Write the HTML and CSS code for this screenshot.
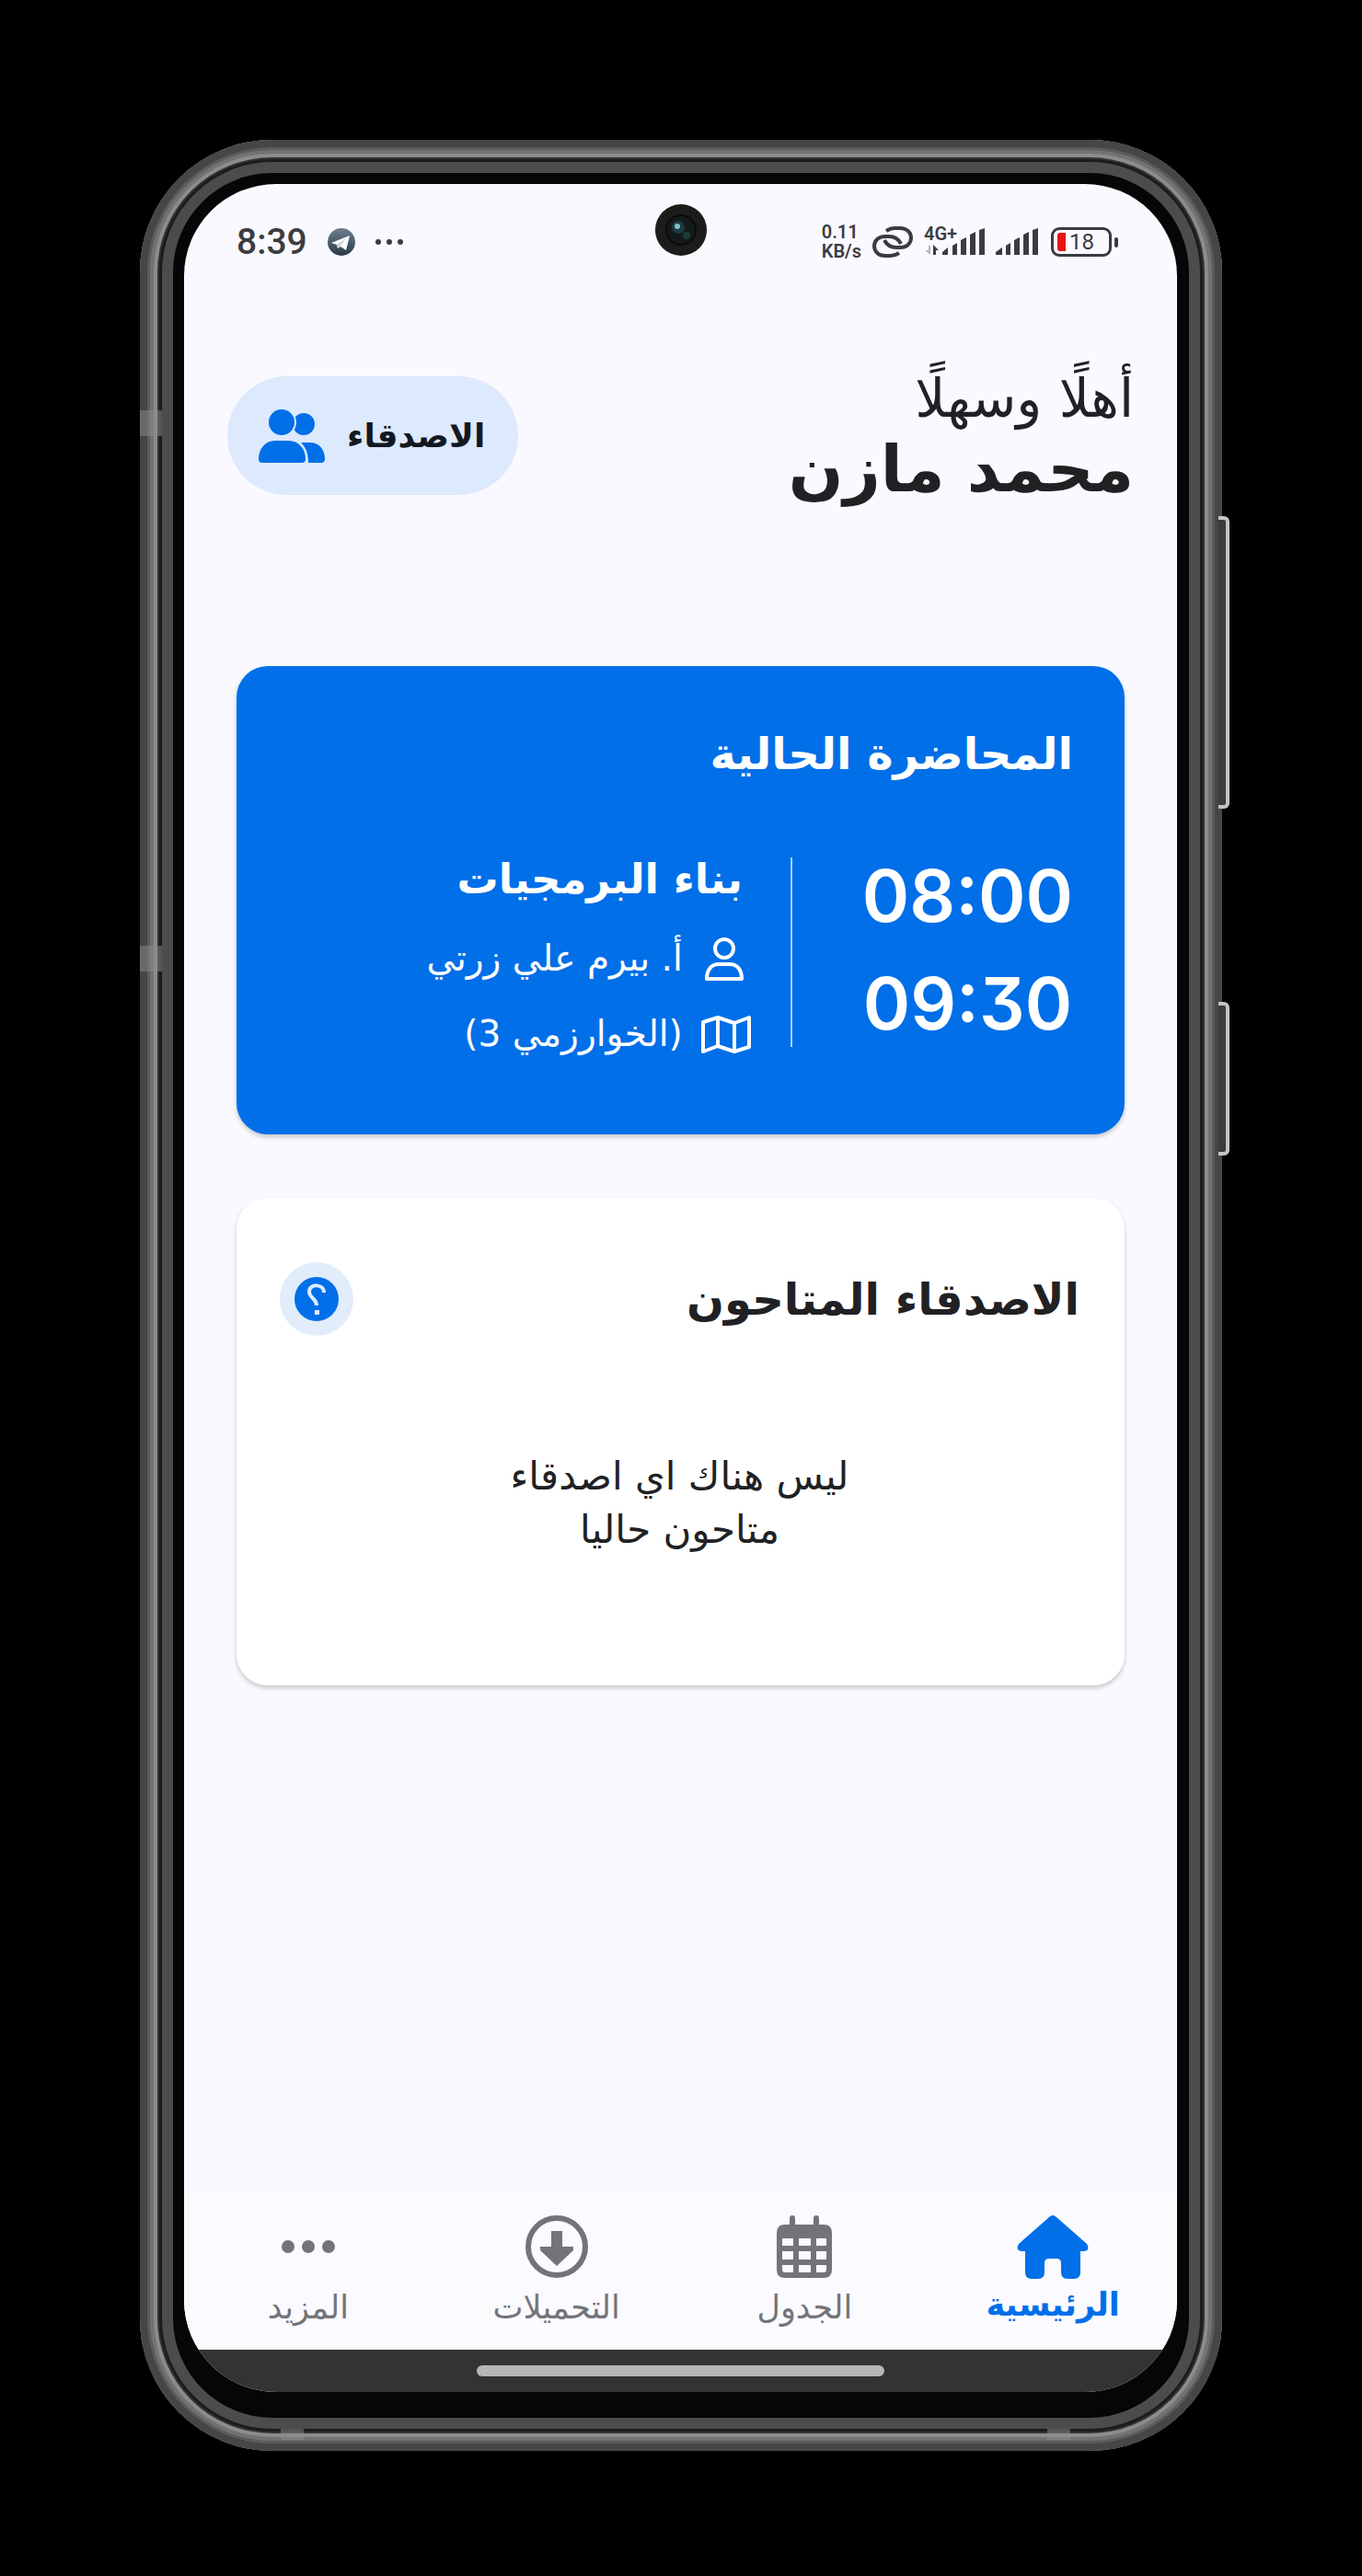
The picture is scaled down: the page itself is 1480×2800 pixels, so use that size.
FILE: index.html
```html
<!DOCTYPE html>
<html lang="ar" dir="rtl">
<head>
<meta charset="utf-8">
<meta name="viewport" content="width=device-width, initial-scale=1">
<title>الرئيسية</title>
<link rel="stylesheet" href="styles.css">
</head>
<body>
<div class="phone">
  <span class="side-key side-key-volume"></span>
  <span class="side-key side-key-power"></span>
  <span class="band band-left-top"></span>
  <span class="band band-left-middle"></span>
  <span class="band band-bottom-start"></span>
  <span class="band band-bottom-end"></span>

  <div class="screen">
    <svg class="camera" viewBox="0 0 56 56" aria-hidden="true">
      <circle cx="28" cy="28" r="28" fill="#1c1c1a"/>
      <circle cx="28" cy="28" r="16" fill="#141a1a" stroke="#0a0b0b" stroke-width="2"/>
      <circle cx="25" cy="25" r="7" fill="#1d3a42"/>
      <circle cx="24" cy="24" r="3" fill="#7fc0cc"/>
      <circle cx="34" cy="34" r="4" fill="#1a3d38"/>
    </svg>

    <div class="status" dir="ltr">
      <div class="status-group status-left">
        <span class="clock">8:39</span>
        <svg width="30" height="30" viewBox="0 0 30 30" aria-hidden="true">
          <defs><linearGradient id="tg" x1="0" y1="0" x2="0" y2="1"><stop offset="0" stop-color="#6d7f8f"/><stop offset="1" stop-color="#2b3a49"/></linearGradient></defs>
          <circle cx="15" cy="15" r="15" fill="url(#tg)"/>
          <path d="M4 16 L24 8 L20 24 L14 20 L11 22 L10 18 Z" fill="#fff"/>
          <path d="M10 18 L20 11 L13 20 L11 22 Z" fill="#c6ced6"/>
        </svg>
        <svg width="30" height="6" viewBox="0 0 30 6" fill="#3c3c40" aria-hidden="true"><circle cx="3" cy="3" r="3"/><circle cx="15" cy="3" r="3"/><circle cx="27" cy="3" r="3"/></svg>
      </div>
      <div class="status-group status-right">
        <span class="speed">0.11<br>KB/s</span>
        <svg class="link-icon" width="44" height="34" viewBox="0 0 44 34" fill="none" stroke="#3c3c40" stroke-width="4" stroke-linecap="butt" aria-hidden="true">
          <path d="M15 5 C18 3 20 2 24 2 H30 C46 2 46 23 30 23 H26 C20 23 16 21 13 15"/>
          <path d="M29 29 C26 31 24 32 20 32 H14 C-2 32 -2 11 14 11 H18 C24 11 28 13 31 19"/>
        </svg>
        <span class="cell">
          <span class="cell-label">4G+</span>
          <svg width="66" height="30" viewBox="0 0 66 30" fill="#3c3c40" aria-hidden="true">
            <path d="M7 19 V29 L1 24 H5 V19Z" fill="#b4b4b8"/><path d="M10 29 V18 L16 24 H13 V29Z"/>
            <path d="M20 29 V26 L26 21 V29Z"/><path d="M31 29 V19 L36 16 V29Z"/><path d="M40 29 V13 L46 10 V29Z"/><path d="M50 29 V7 L56 4 V29Z"/><path d="M60 29 V2 L66 0 V29Z"/>
          </svg>
        </span>
        <svg class="signal" width="46" height="30" viewBox="0 0 46 30" fill="#3c3c40" aria-hidden="true">
          <path d="M0 29 V26 L7 21 V29Z"/><path d="M11 29 V19 L16 16 V29Z"/><path d="M20 29 V13 L26 10 V29Z"/><path d="M30 29 V7 L36 4 V29Z"/><path d="M40 29 V2 L46 0 V29Z"/>
        </svg>
        <span class="battery"><span class="battery-level"></span>18</span>
      </div>
    </div>

    <main class="content">
      <header class="header">
        <div>
          <p class="greeting">أهلًا وسهلًا</p>
          <h1 class="name">محمد مازن</h1>
        </div>
        <button class="friends" type="button">
          <span>الاصدقاء</span>
          <svg width="72" height="58" viewBox="0 0 72 58" fill="#006fe8" aria-hidden="true">
            <circle cx="49" cy="16" r="12"/>
            <path d="M38 36 H56 C66 36 72 44 72 54 Q72 58 68 58 H38Z"/>
            <circle cx="25" cy="14" r="16" fill="#dde9fc"/>
            <path d="M0 32 H34 C47 32 54 43 54 58 H0Z" fill="#dde9fc"/>
            <circle cx="25" cy="14" r="14"/>
            <path d="M18 34 H32 C44 34 51 43 51 54 Q51 58 47 58 H4 Q0 58 0 54 C0 43 7 34 18 34Z"/>
          </svg>
        </button>
      </header>

      <section class="card lecture">
        <h2 class="card-title">المحاضرة الحالية</h2>
        <div class="lecture-body">
          <div class="times"><time>08:00</time><time>09:30</time></div>
          <div class="details">
            <h3 class="subject">بناء البرمجيات</h3>
            <p class="meta">
              <svg width="54" height="48" viewBox="0 0 54 48" fill="none" stroke="#fff" stroke-width="4" stroke-linejoin="round" aria-hidden="true"><circle cx="25" cy="13" r="10"/><path d="M6 46 C6 35 12 30 19 30 H31 C38 30 44 35 44 46Z"/></svg>
              <span>أ. بيرم علي زرتي</span>
            </p>
            <p class="meta">
              <svg width="54" height="48" viewBox="0 0 54 48" fill="none" stroke="#fff" stroke-width="4" stroke-linejoin="round" aria-hidden="true"><path d="M2 11 L18 6 L36 12 L52 6 V38 L36 43 L18 37 L2 43Z M18 6 V37 M36 12 V43"/></svg>
              <span>(الخوارزمي 3)</span>
            </p>
          </div>
        </div>
      </section>

      <section class="card available">
        <div class="available-head">
          <h2 class="card-title">الاصدقاء المتاحون</h2>
          <button class="help" type="button" aria-label="مساعدة">
            <svg width="48" height="48" viewBox="0 0 48 48" aria-hidden="true"><circle cx="24" cy="24" r="24" fill="#006fe8"/><path d="M32 17 C32 7 16 7 16 16 C16 23 24 23 24 31" fill="none" stroke="#dcebff" stroke-width="4"/><path d="M22 36 h5 v5 h-5z" fill="#dcebff"/></svg>
          </button>
        </div>
        <p class="empty">ليس هناك اي اصدقاء<br>متاحون حاليا</p>
      </section>
    </main>

    <nav class="tabs">
      <a class="tab tab-active" href="#home" aria-current="page">
        <svg width="78" height="70" viewBox="0 0 78 70" fill="currentColor" aria-hidden="true"><path d="M35 2 Q39 -2 43 2 L76 31 Q80 38 73 39 H69 V62 Q69 69 62 69 H55 Q48 69 48 62 V52 Q48 47 43 47 H35 Q30 47 30 52 V62 Q30 69 23 69 H16 Q9 69 9 62 V39 H5 Q-2 38 2 31Z"/></svg>
        <span>الرئيسية</span>
      </a>
      <a class="tab" href="#schedule">
        <svg width="60" height="68" viewBox="0 0 60 68" fill="currentColor" aria-hidden="true"><path fill-rule="evenodd" d="M14 10 V3 Q14 0 17 0 T20 3 V10 H40 V3 Q40 0 43 0 T46 3 V10 H51 Q60 10 60 19 V59 Q60 68 51 68 H9 Q0 68 0 59 V19 Q0 10 9 10Z M6 25 V33 H18 V25Z M24 25 V33 H37 V25Z M43 25 V33 H54 V25Z M6 39 V48 H18 V39Z M24 39 V48 H37 V39Z M43 39 V48 H54 V39Z M6 54 V59 Q6 62 9 62 H18 V54Z M24 54 V62 H37 V54Z M43 54 V62 H51 Q54 62 54 59 V54Z"/></svg>
        <span>الجدول</span>
      </a>
      <a class="tab" href="#downloads">
        <svg width="68" height="68" viewBox="0 0 68 68" fill="currentColor" aria-hidden="true"><circle cx="34" cy="34" r="31" fill="none" stroke="currentColor" stroke-width="6"/><path d="M28 17 H40 V34 H52 V38 L34 55 L16 38 V34 H28Z"/></svg>
        <span>التحميلات</span>
      </a>
      <a class="tab" href="#more">
        <svg width="58" height="68" viewBox="0 0 58 68" fill="currentColor" aria-hidden="true"><circle cx="7" cy="34" r="7"/><circle cx="29" cy="34" r="7"/><circle cx="51" cy="34" r="7"/></svg>
        <span>المزيد</span>
      </a>
    </nav>
    <div class="gesture"><span class="gesture-handle"></span></div>
  </div>
</div>
</body>
</html>
```

FILE: styles.css
```css
* { box-sizing: border-box; }

body {
  margin: 0;
  padding: 152px 152px 136px;
  background: #000;
  color: #212124;
  font-family: "DejaVu Sans", sans-serif;
}

h1, h2, h3, p { margin: 0; }
svg { display: block; flex: none; }
button { border: 0; font: inherit; color: inherit; cursor: pointer; }

/* Handset */
.phone {
  position: relative;
  padding: 48px 49px 64px 48px;
  border-radius: 144px;
  background: #060606;
  box-shadow:
    inset 0 0 0 8px #464646,
    inset 0 0 0 11px #5c5c5c,
    inset 0 0 0 15px #727272,
    inset 0 0 0 19px #8c8c8c,
    inset 0 0 0 21px #333,
    inset 0 0 0 24px #1c1c1c,
    inset 0 0 0 36px #4c4c4c;
}

.side-key {
  position: absolute;
  right: -8px;
  width: 12px;
  border: 4px solid #c4c4c4;
  border-left: 0;
  border-radius: 0 6px 6px 0;
  background: #3c3c3c;
}
.side-key-volume { top: 409px; height: 318px; }
.side-key-power { top: 937px; height: 167px; }

.band { position: absolute; background: rgba(140, 140, 140, 0.5); }
.band-left-top, .band-left-middle { left: 0; width: 24px; height: 28px; }
.band-left-top { top: 294px; }
.band-left-middle { top: 876px; }
.band-bottom-start, .band-bottom-end { bottom: 12px; width: 25px; height: 12px; }
.band-bottom-start { left: 153px; }
.band-bottom-end { right: 165px; }

.screen {
  position: relative;
  display: flex;
  flex-direction: column;
  min-height: calc(100vh - 400px);
  overflow: hidden;
  border-radius: 100px;
  background: #f9f9ff;
}

.camera {
  position: absolute;
  top: 22px;
  left: calc(50% - 28px);
  width: 56px;
  height: 56px;
}

/* Status bar */
.status {
  display: flex;
  justify-content: space-between;
  height: 126px;
  padding: 0 64px 0 57px;
  color: #3c3c40;
  font-family: Roboto, sans-serif;
}
.status-group { display: flex; align-items: center; }
.status-left { gap: 22px; }
.clock { font-size: 39px; font-weight: 500; }
.speed { font-size: 20px; font-weight: 600; line-height: 21px; }
.link-icon { margin: 0 12px 0 12px; }
.cell { position: relative; }
.cell-label {
  position: absolute;
  top: -4px;
  left: 0;
  font-size: 20px;
  font-weight: 600;
  line-height: 20px;
}
.signal { margin: 0 14px 0 12px; }
.battery {
  position: relative;
  display: flex;
  align-items: center;
  gap: 4px;
  width: 66px;
  height: 32px;
  margin-right: 7px;
  padding-left: 4px;
  border: 3px solid #3c3c40;
  border-radius: 9px;
  font-size: 24px;
}
.battery::after {
  content: "";
  position: absolute;
  right: -10px;
  width: 4px;
  height: 11px;
  border-radius: 2px;
  background: #3c3c40;
}
.battery-level { width: 9px; height: 20px; border-radius: 3px 0 0 3px; background: #e81414; }

/* Header */
.content { flex: 1; padding: 83px 57px 40px; }
.header {
  display: flex;
  justify-content: space-between;
  align-items: flex-start;
  margin: 0 -10px 161px;
}
.greeting { font-size: 58px; line-height: 48px; }
.name { font-size: 70px; line-height: 106px; }
.friends {
  display: flex;
  align-items: center;
  gap: 24px;
  height: 129px;
  padding: 0 36px 0 34px;
  border-radius: 65px;
  background: #dde9fc;
  color: #14181f;
  font-size: 36px;
  font-weight: 700;
}

/* Cards */
.card { border-radius: 34px; box-shadow: 0 3px 5px rgba(0, 0, 0, 0.2); }
.card-title { font-size: 48px; line-height: 76px; }

.lecture { padding: 57px 56px 68px; background: #006fe8; color: #fff; }
.lecture-body { display: flex; align-items: flex-start; margin-top: 58px; }
.times {
  display: flex;
  flex-direction: column;
  align-items: center;
  font-family: Inter, sans-serif;
  font-size: 78px;
  font-weight: 600;
  font-feature-settings: "cv09";
  line-height: 117px;
}
.details { position: relative; flex: 1; margin-right: 76px; padding-right: 45px; }
.details::before {
  content: "";
  position: absolute;
  top: 17px;
  right: 0;
  width: 2px;
  height: 206px;
  background: #a9cdf7;
}
.subject { padding: 0 9px 4px 0; font-size: 45px; line-height: 82px; }
.meta { display: flex; align-items: center; gap: 20px; font-size: 39px; line-height: 82px; }

.available { margin-top: 69px; padding: 70px 49px 140px 47px; background: #fff; }
.available-head { display: flex; justify-content: space-between; align-items: center; }
.help {
  display: grid;
  place-items: center;
  width: 80px;
  height: 80px;
  padding: 0;
  border-radius: 50%;
  background: #e1edfb;
}
.empty { margin-top: 124px; font-size: 42px; line-height: 58px; text-align: center; }

/* Bottom navigation */
.tabs {
  display: grid;
  grid-template-columns: repeat(4, 1fr);
  padding: 20px 0 18px;
  background: #fafaff;
}
.tab {
  display: flex;
  flex-direction: column;
  align-items: center;
  gap: 4px;
  color: #747478;
  font-size: 35px;
  line-height: 56px;
  text-decoration: none;
}
.tab-active { color: #006fe8; font-weight: 700; line-height: 46px; }

.gesture { display: grid; place-items: center; height: 46px; background: #333; }
.gesture-handle { width: 41%; height: 12px; border-radius: 6px; background: #b6b6b6; }
```
